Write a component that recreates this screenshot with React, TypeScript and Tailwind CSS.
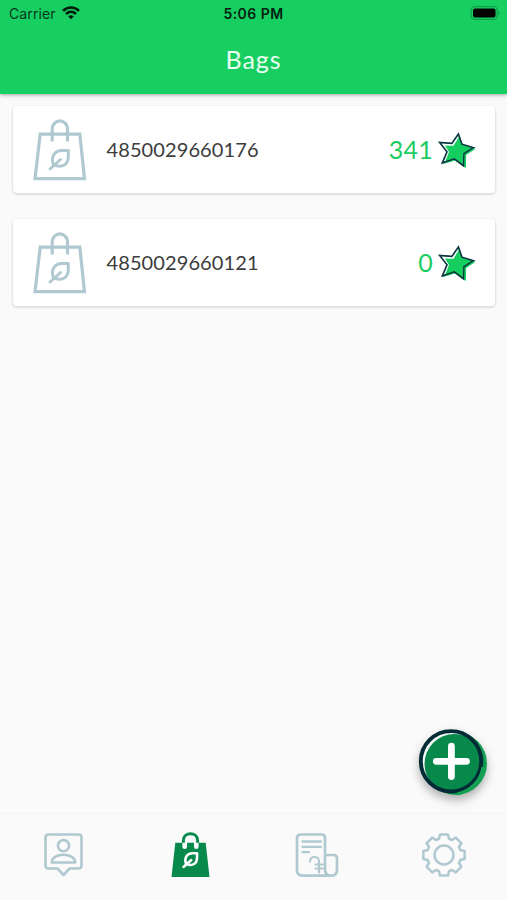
import React from "react";

const LINE = "#b0c9d0";

function Leaf({ color, width }: { color: string; width: number }) {
  return (
    <g fill="none" stroke={color} strokeWidth={width} strokeLinecap="round" strokeLinejoin="round">
      <path d="M23.500 49C20.500 41 24.500 34.400 32 34.400H38.300V40.500C38.300 49 32 51.500 25.800 49.500" />
      <path d="M20 53L30.500 43.500" />
    </g>
  );
}

function BagOutline() {
  return (
    <svg className="h-[68px] w-[60px] shrink-0" viewBox="0 0 60 68" fill="none">
      <path d="M10.2 18.200H49.800L54.500 62.600H5L10.2 18.200Z" stroke={LINE} strokeWidth="3.2" />
      <path d="M22.2 25.500V13.500C22.2 2 37.5 2 37.5 13.500V25.500" stroke={LINE} strokeWidth="3.2" />
      <Leaf color={LINE} width={3} />
    </svg>
  );
}

function Star() {
  return (
    <svg className="h-10 w-10 shrink-0" viewBox="0 0 40 40">
      <path d="M21.5 4L25.600 14.600L38 18L28.800 24.500L28.800 38L18 30.500L6 34L10 22L3 12.500L15 13.500Z" fill="#14ce60" />
      <path d="M21 5L15.300 14L4 13L10.600 21.700L6.200 32L8.300 31.200L12 22L8 15.400L16.500 15.800L21.800 7Z" fill="#fff" />
      <path d="M21.400 4L25 14.200L36.600 17.800L27 23.800L26.600 36L17.300 28.800L5.300 33L10 21.800L2.600 12.400L14.800 13.400Z" fill="none" stroke="#0b3340" strokeWidth="1.6" />
      <path d="M37.500 18.700L28.400 24.700L28.200 37" fill="none" stroke="#14ce60" strokeWidth="1.500" />
    </svg>
  );
}

function BagCard({ code, points }: { code: string; points: number }) {
  return (
    <div className="flex h-[87px] items-center rounded-[4px] bg-white pl-[17px] pr-[18px] shadow-[0_1px_2px_1px_rgba(0,0,0,0.11)]">
      <BagOutline />
      <span className="ml-[16.5px] pb-[2px] text-[20px] leading-6 tracking-[0.1px] text-[#3c3c3c]">{code}</span>
      <span className="ml-auto mr-[4px] pb-[2px] text-[25px] leading-8 tracking-[0.25px] text-[#19cc61]">{points}</span>
      <Star />
    </div>
  );
}

function ContactIcon() {
  return (
    <svg className="h-[50px] w-[44px] translate-x-[0.5px]" viewBox="0 0 44 50" fill="none" stroke={LINE} strokeWidth="2.6" strokeLinejoin="round">
      <path d="M7 4.500H37Q40 4.500 40 7.500V35.500Q40 38.500 37 38.500H28L22 45L16 38.500H7Q4 38.500 4 35.500V7.500Q4 4.500 7 4.500Z" />
      <circle cx="22" cy="15.700" r="5.6" />
      <path d="M10.300 32.500C10.300 22.200 33.700 22.200 33.700 32.500Z" />
    </svg>
  );
}

function BagFilled() {
  return (
    <svg className="h-[50px] w-[44px] translate-x-[0.5px]" viewBox="0 0 44 50" fill="none">
      <path d="M6.800 12.700H37.200L41 47H3Z" fill="#07894b" />
      <path d="M16.200 16.800V11C16.200 3.800 27.800 3.800 27.800 11V16.800" stroke="#fafafa" strokeWidth="4.600" strokeLinecap="round" />
      <path d="M14.900 12.700V10.500C14.900 1.500 29.100 1.500 29.100 10.500V12.700" stroke="#07894b" strokeWidth="3" />
      <g transform="translate(.2 -2.200) scale(.74)">
        <Leaf color="#fff" width={3.4} />
      </g>
    </svg>
  );
}

function ReceiptIcon() {
  return (
    <svg className="h-[50px] w-[44px]" viewBox="0 0 44 50" fill="none" stroke={LINE} strokeWidth="2.700" strokeLinecap="round" strokeLinejoin="round">
      <path d="M36 45.700H8Q2 45.700 2 39.700V8Q2 4.500 5.500 4.500H26.500Q30 4.500 30 8V39Q30 45.700 36 45.700Q42 45.700 42 39.700V28.500Q42 25 38.500 25H30" />
      <path d="M7.500 11.500H26M7.500 16.800H26M7.500 22.200H14" strokeWidth="2.300" />
      <path d="M15 31.500C15 25.500 24 25.500 24 31.500V42.500M20.500 34.500H28M20.500 38.500H28" strokeWidth="2.200" />
    </svg>
  );
}

const gearPoints = Array.from({ length: 8 }, (_, tooth) =>
  [
    [-17, 17],
    [-11, 21],
    [11, 21],
    [17, 17],
  ].map(([offset, radius]) => {
    const angle = ((tooth * 45 + offset) * Math.PI) / 180;
    return `${(23 + radius * Math.sin(angle)).toFixed(2)},${(25 - radius * Math.cos(angle)).toFixed(2)}`;
  }).join(" "),
).join(" ");

function GearIcon() {
  return (
    <svg className="h-[50px] w-[46px]" viewBox="0 0 46 50" fill="none" stroke={LINE} strokeWidth="2.500" strokeLinejoin="round">
      <polygon points={gearPoints} />
      <circle cx="23" cy="25" r="9.500" />
    </svg>
  );
}

function StatusBar() {
  return (
    <div className="grid h-7 grid-cols-3 items-center pl-[9px] pr-[6px] font-['Inter',sans-serif] text-[#06361d]">
      <div className="flex items-center gap-[6px]">
        <span className="text-[14px] leading-5 tracking-[0.1px]">Carrier</span>
        <svg className="mb-[2px] h-[14px] w-[18px]" viewBox="0 0 18 14" fill="none" stroke="#021b0d" strokeWidth="2.600">
          <path d="M1 4.900C5.600.400 12.400.400 17 4.900M4 8C6.900 5.200 11.100 5.200 14 8" />
          <path d="M6.200 10.400Q9 8 11.800 10.400L9 13.300Z" fill="#021b0d" stroke="none" />
        </svg>
      </div>
      <span className="-ml-[3px] text-center text-[14px] font-semibold leading-5 tracking-[0.45px] text-[#03200f]">5:06 PM</span>
      <svg className="mb-[2px] h-[14px] w-[31px] justify-self-end" viewBox="0 0 31 14">
        <rect x="1.200" y=".7" width="26" height="12.600" rx="3.500" fill="none" stroke="#10a24b" strokeWidth="1.300" />
        <rect x="3" y="2.500" width="22.500" height="9" rx="2" fill="#000" />
        <path d="M28.500 4.700Q31 7 28.500 9.300Z" fill="#10a24b" />
      </svg>
    </div>
  );
}

export default function App() {
  return (
    <div className="relative flex h-[900px] w-[507px] flex-col overflow-hidden bg-[#fafafa] font-['Lato',sans-serif]">
      <header className="h-[94px] shrink-0 bg-[#17cf61] shadow-[0_1px_4px_rgba(0,0,0,0.35)]">
        <StatusBar />
        <h1 className="pt-[15px] text-center text-[25px] leading-8 tracking-[0.9px] text-[#e9fff1]">Bags</h1>
      </header>
      <main className="flex flex-1 flex-col gap-[26px] pl-[13px] pt-[12px] pr-[12px]">
        <BagCard code="4850029660176" points={341} />
        <BagCard code="4850029660121" points={0} />
      </main>
      <button aria-label="Add bag" className="absolute left-[416px] top-[726px] h-[76px] w-[76px]">
        <svg className="h-[76px] w-[76px] overflow-visible drop-shadow-[0_5px_5px_rgba(0,0,0,0.3)]" viewBox="0 0 76 76">
          <circle cx="39.500" cy="37.500" r="31.500" fill="#13a052" />
          <circle cx="35" cy="35.300" r="30.500" fill="#f3f8f5" />
          <circle cx="38.500" cy="38" r="30" fill="#07894b" />
          <circle cx="35" cy="35.300" r="30.200" fill="none" stroke="#032b35" strokeWidth="3.900" />
          <path d="M67 41A32.500 32.500 0 0 1 41 68" fill="none" stroke="#13a052" strokeWidth="3" />
          <path d="M20.300 35.300H50.500M35.400 20.200V50.500" stroke="#fff" strokeWidth="6.800" strokeLinecap="round" />
        </svg>
      </button>
      <nav className="grid h-[87px] shrink-0 grid-cols-4 justify-items-center border-t border-[#f3f3f3] bg-[#fafafa] pt-[16px]">
        <ContactIcon />
        <BagFilled />
        <ReceiptIcon />
        <GearIcon />
      </nav>
    </div>
  );
}
